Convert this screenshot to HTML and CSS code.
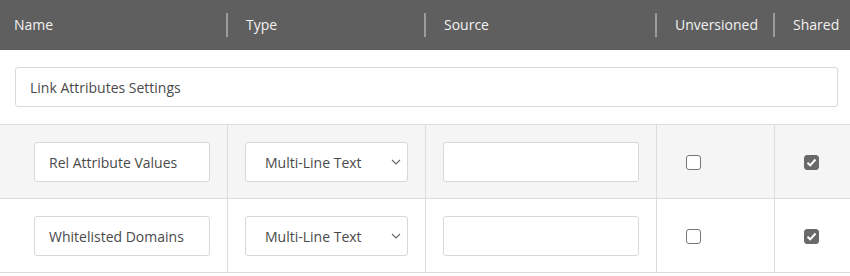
FILE: index.html
```html
<!DOCTYPE html>
<html lang="en">
<head>
    <meta charset="UTF-8">
    <title>Fields</title>
    <link rel="stylesheet" href="styles.css">
</head>
<body>

    <!-- Column headings -->
    <div class="grid head">
        <div class="hcell first">Name</div>
        <div class="hcell">Type</div>
        <div class="hcell">Source</div>
        <div class="hcell">Unversioned</div>
        <div class="hcell">Shared</div>
    </div>

    <!-- Section -->
    <div class="section">
        <input class="field" type="text" value="Link Attributes Settings">
    </div>

    <!-- Field rows -->
    <div class="grid row shaded">
        <div class="cell first"><input class="field" type="text" value="Rel Attribute Values"></div>
        <div class="cell">
            <span class="select-wrap">
                <select class="field">
                    <option>Multi-Line Text</option>
                </select>
                <svg class="chevron" width="10" height="6" viewBox="0 0 10 6"><path d="M1 1 L5 5 L9 1" fill="none" stroke="#666" stroke-width="1.1"/></svg>
            </span>
        </div>
        <div class="cell"><input class="field" type="text" value=""></div>
        <div class="cell check-cell"><span class="box"></span></div>
        <div class="cell check-cell">
            <span class="box on"><svg width="11" height="9" viewBox="0 0 11 9"><path d="M1.5 4.8 L4.2 7.3 L9.5 1.5" fill="none" stroke="#fff" stroke-width="2"/></svg></span>
        </div>
    </div>

    <div class="grid row">
        <div class="cell first"><input class="field" type="text" value="Whitelisted Domains"></div>
        <div class="cell">
            <span class="select-wrap">
                <select class="field">
                    <option>Multi-Line Text</option>
                </select>
                <svg class="chevron" width="10" height="6" viewBox="0 0 10 6"><path d="M1 1 L5 5 L9 1" fill="none" stroke="#666" stroke-width="1.1"/></svg>
            </span>
        </div>
        <div class="cell"><input class="field" type="text" value=""></div>
        <div class="cell check-cell"><span class="box"></span></div>
        <div class="cell check-cell">
            <span class="box on"><svg width="11" height="9" viewBox="0 0 11 9"><path d="M1.5 4.8 L4.2 7.3 L9.5 1.5" fill="none" stroke="#fff" stroke-width="2"/></svg></span>
        </div>
    </div>

</body>
</html>
```

FILE: styles.css
```css
body {
    margin: 0;
    font-family: "Open Sans", Arial, sans-serif;
    font-size: 14px;
    color: #444;
    background: white;
}

/* Shared column grid */
.grid {
    display: grid;
    grid-template-columns: 227px 198px 231px 118px 1fr;
}

/* Header Bar */
.head {
    background-color: #5f5f5f;
    color: #f2f2f2;
    height: 50px;
}

.hcell {
    position: relative;
    display: flex;
    align-items: center;
    padding-left: 19px;
    padding-bottom: 2px;
}

/* thin divider between headings */
.hcell::before {
    content: "";
    position: absolute;
    left: -1px;
    top: 13px;
    width: 2px;
    height: 24px;
    background-color: #9c9c9c;
}

.hcell.first {
    padding-left: 14px;
}

.hcell.first::before {
    display: none;
}

/* Section row */
.section {
    padding: 17px 12px 17px 15px;
    border-bottom: 1px solid #dcdcdc;
}

/* Inputs */
.field {
    display: block;
    width: 100%;
    height: 40px;
    box-sizing: border-box;
    border: 1px solid #d8d8d8;
    border-radius: 3px;
    background: white;
    padding: 0 14px;
    font-family: "Open Sans", Arial, sans-serif;
    font-size: 14px;
    color: #4a4a4a;
    outline: none;
}

select.field {
    appearance: none;
    -webkit-appearance: none;
    padding-left: 19px;
}

.select-wrap {
    position: relative;
    display: block;
}

.chevron {
    position: absolute;
    right: 7px;
    top: 17px;
}

/* Field rows */
.row {
    border-bottom: 1px solid #dcdcdc;
}

.row.shaded {
    background-color: #f5f5f5;
}

.cell {
    padding: 17px 17px 16px 17px;
    border-left: 1px solid #dcdcdc;
}

.cell.first {
    padding-left: 34px;
    border-left: 0;
}

.check-cell {
    display: flex;
    align-items: center;
    padding-left: 29px;
}

/* Checkboxes */
.box {
    width: 15px;
    height: 15px;
    box-sizing: border-box;
    border: 1.5px solid #777;
    border-radius: 3px;
    background: white;
    display: flex;
    align-items: center;
    justify-content: center;
}

.box.on {
    background: #696969;
    border-color: #696969;
}
```
